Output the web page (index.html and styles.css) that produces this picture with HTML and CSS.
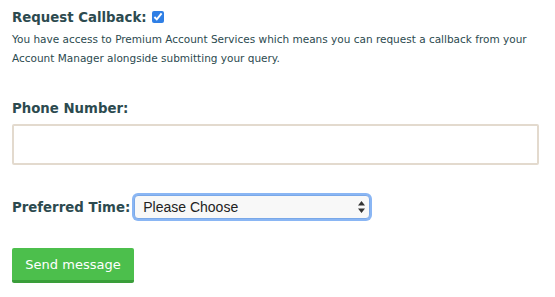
FILE: index.html
```html
<!DOCTYPE html>
<html lang="en">
<head>
    <meta charset="UTF-8">
    <title>Request Callback</title>
    <link rel="stylesheet" href="styles.css">
</head>
<body>
    <form class="callback-form">
        <div class="form-group callback">
            <label class="heading" for="callback">Request Callback: <input type="checkbox" id="callback" checked></label>
            <p class="note">You have access to Premium Account Services which means you can request a callback from your Account Manager alongside submitting your query.</p>
        </div>

        <div class="form-group">
            <label class="heading block" for="phone">Phone Number:</label>
            <input type="text" id="phone" class="text-input">
        </div>

        <div class="form-group inline">
            <label class="heading" for="time">Preferred Time:</label>
            <span class="select-wrap">
                <select id="time" class="select">
                    <option>Please Choose</option>
                    <option>Morning</option>
                    <option>Afternoon</option>
                </select>
                <svg class="select-arrows" width="7" height="12" viewBox="0 0 7 12">
                    <path d="M3.5 0 L7 4.5 H0 Z M3.5 12 L7 7.5 H0 Z" fill="#333"/>
                </svg>
            </span>
        </div>

        <button type="submit" class="btn">Send message</button>
    </form>
</body>
</html>
```

FILE: styles.css
```css
body {
    margin: 0;
    padding: 0 12px;
    background: #fff;
    font-family: "DejaVu Sans", Verdana, sans-serif;
    color: #2c4a4f;
}

.callback-form {
    width: 527px;
}

.form-group {
    margin: 0;
}

.heading {
    font-size: 13.3px;
    font-weight: bold;
    color: #2c4a4f;
}

.callback {
    padding-top: 8px;
}

.callback .heading {
    display: flex;
    align-items: center;
    gap: 5px;
    height: 18px;
}

.callback input {
    margin: 0;
    width: 12px;
    height: 12px;
    accent-color: #2f7fe5;
}

.note {
    margin: 4px 0 0;
    font-size: 10.5px;
    line-height: 19px;
}

.block {
    display: block;
    margin-top: 33px;
    margin-bottom: 8px;
}

.text-input {
    display: block;
    box-sizing: border-box;
    width: 100%;
    height: 41px;
    border: 2px solid #e3dace;
    border-radius: 2px;
    background: #fff;
    outline: none;
}

.inline {
    display: flex;
    align-items: center;
    gap: 4px;
    margin-top: 30px;
}

.select-wrap {
    position: relative;
    display: inline-block;
    height: 24px;
}

.select {
    appearance: none;
    -webkit-appearance: none;
    width: 236px;
    height: 24px;
    font-family: "Liberation Sans", Arial, sans-serif;
    font-size: 14px;
    color: #222;
    border: 1px solid #7aa8e8;
    border-radius: 4px;
    background: #f8f8f8;
    box-shadow: 0 0 0 2px #8ab6f4;
    padding: 0 8px;
    outline: none;
}

.select-arrows {
    position: absolute;
    right: 5px;
    top: 6px;
    pointer-events: none;
}

.btn {
    display: block;
    margin-top: 29px;
    width: 122px;
    height: 35px;
    background: #4cbf4c;
    border: none;
    border-bottom: 3px solid #3a9e3a;
    border-radius: 2px;
    color: #fff;
    font-family: "DejaVu Sans", sans-serif;
    font-size: 13px;
    cursor: pointer;
}
```
